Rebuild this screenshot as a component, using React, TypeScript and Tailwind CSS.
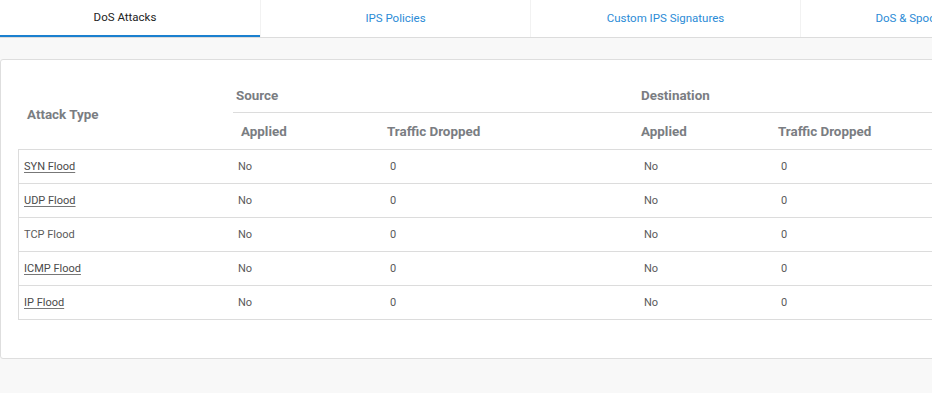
const tabs = ['DoS Attacks', 'IPS Policies', 'Custom IPS Signatures', 'DoS & Spoof Protection'];

const rows = [
  { name: 'SYN Flood', link: true },
  { name: 'UDP Flood', link: true },
  { name: 'TCP Flood', link: false },
  { name: 'ICMP Flood', link: true },
  { name: 'IP Flood', link: true },
];

const cols = 'grid grid-cols-[215px_152px_254px_137px_1fr]';

export default function App() {
  return (
    <div
      className="w-[932px] h-[393px] overflow-hidden bg-[#f8f8f8]"
      style={{ fontFamily: 'Roboto, "Noto Sans", sans-serif' }}
    >
      {/* Tabs */}
      <div className="flex h-[38px] bg-white border-b border-[#dcdcdc] whitespace-nowrap">
        {tabs.map((t, i) => (
          <div
            key={t}
            className={
              'shrink-0 h-[37px] flex items-center justify-center text-[11.5px] ' +
              (i === 0
                ? 'w-[260px] pr-[10px] text-[#222] border-b-2 border-[#1b80cf]'
                : 'w-[270px] text-[#2b8bd6] border-l border-[#f2f2f2]')
            }
          >
            {t}
          </div>
        ))}
      </div>

      {/* Card */}
      <div className="mt-[21px] w-[1000px] h-[300px] bg-white border border-[#dedede] rounded-[3px] pl-[17px] pt-[19px]">
        <div className="w-[1000px]">
          {/* header */}
          <div className={cols + ' text-[13.4px] font-bold text-[#7a7d82]'}>
            <div className="row-span-2 flex items-center pl-[9px] pt-[2px]">Attack Type</div>
            <div className="col-span-2 h-[34px] flex items-center pl-[3px] pt-[2px] border-b border-[#dcdcdc]">Source</div>
            <div className="col-span-2 h-[34px] flex items-center pl-[2px] pt-[2px] border-b border-[#dcdcdc]">Destination</div>
            <div className="h-[36px] flex items-center pl-[8px] pt-[2px]">Applied</div>
            <div className="h-[36px] flex items-center pl-[2px] pt-[2px]">Traffic Dropped</div>
            <div className="h-[36px] flex items-center pl-[2px] pt-[2px]">Applied</div>
            <div className="h-[36px] flex items-center pl-[2px] pt-[2px]">Traffic Dropped</div>
          </div>
          {/* body */}
          <div className="border-l border-t border-[#dcdcdc] text-[11px] text-[#5a5a5a]">
            {rows.map((r) => (
              <div key={r.name} className={cols + ' h-[34px] pt-[2px] items-center border-b border-[#dcdcdc]'}>
                <div className="pl-[5px]">
                  {r.link ? (
                    <a href="#" className="underline text-[#4a4a4a] underline-offset-2 decoration-[#777]">
                      {r.name}
                    </a>
                  ) : (
                    r.name
                  )}
                </div>
                <div className="pl-[4px]">No</div>
                <div className="pl-[4px]">0</div>
                <div className="pl-[4px]">No</div>
                <div className="pl-[4px]">0</div>
              </div>
            ))}
          </div>
        </div>
      </div>
    </div>
  );
}
